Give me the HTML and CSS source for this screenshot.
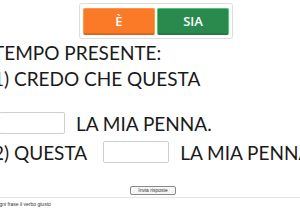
FILE: index.html
```html
<!DOCTYPE html>
<html lang="it">
<head>
    <meta charset="UTF-8">
    <meta name="viewport" content="width=device-width, initial-scale=1.0">
    <title>Verbo giusto</title>
    <link rel="stylesheet" href="styles.css">
</head>
<body>
    <div class="choices">
        <button type="button" class="choice choice-e">È</button>
        <button type="button" class="choice choice-sia">SIA</button>
    </div>

    <div class="exercise">
        <p class="line">TEMPO PRESENTE:</p>
        <p class="line">1) CREDO CHE QUESTA</p>
        <p class="line line-wrap"><input type="text" class="blank blank-first"> LA MIA PENNA.</p>
        <p class="line line-next">2) QUESTA <input type="text" class="blank"> LA MIA PENNA.</p>
    </div>

    <div class="actions">
        <button type="button" class="btn-send">Invia risposte</button>
    </div>

    <div class="footer">
        <span class="hint">Scegli per ogni frase il verbo giusto</span>
    </div>
</body>
</html>
```

FILE: styles.css
```css
body {
    margin: 0;
    padding: 0;
    width: 300px;
    height: 209px;
    overflow: hidden;
    background-color: #ffffff;
    font-family: Lato, "Open Sans", sans-serif;
    color: #1a1a1a;
}

.choices {
    display: flex;
    gap: 2px;
    width: 147px;
    margin: 3px 0 0 79px;
    padding: 4px 2px 3px 3px;
    border: 1px solid #dcdcdc;
    border-radius: 3px;
}

.choice {
    width: 72px;
    height: 27px;
    padding: 0;
    border-radius: 2px;
    color: #ffffff;
    font-family: "Open Sans", Arial, sans-serif;
    font-size: 13px;
    font-weight: 600;
    cursor: pointer;
}

.choice-e {
    background-color: #fb7a28;
    border: 1px solid #fd9550;
    border-bottom: 2px solid #de631b;
}

.choice-sia {
    background-color: #2a8a4e;
    border: 1px solid #43cc70;
    border-bottom: 2px solid #247a44;
}

.exercise {
    margin-left: -7px;
    font-size: 19px;
    white-space: nowrap;
}

.line {
    display: flex;
    align-items: center;
    margin: 0;
    height: 26px;
}

.line-wrap {
    margin-top: 19px;
}

.line-next {
    margin-top: 3px;
}

.blank {
    flex: none;
    width: 66px;
    height: 22px;
    box-sizing: border-box;
    margin: 0 11px 0 16px;
    border: 1px solid #cfcfcf;
    border-radius: 2px;
}

.blank-first {
    margin-left: 6px;
}

.actions {
    display: flex;
    justify-content: center;
    margin-top: 21px;
    padding-left: 6px;
}

.btn-send {
    width: 46px;
    height: 9px;
    padding: 0;
    border: 1px solid #8a8a8a;
    border-radius: 2px;
    background-color: #f6f6f6;
    font-family: Arial, sans-serif;
    font-size: 5px;
    line-height: 7px;
    color: #333;
}

.footer {
    margin-top: 2px;
    border-top: 1px solid #e6e6e6;
    padding-top: 3px;
    overflow: hidden;
}

.hint {
    display: block;
    margin-left: -27px;
    font-family: Arial, sans-serif;
    font-size: 5px;
    color: #333;
    white-space: nowrap;
}
```
